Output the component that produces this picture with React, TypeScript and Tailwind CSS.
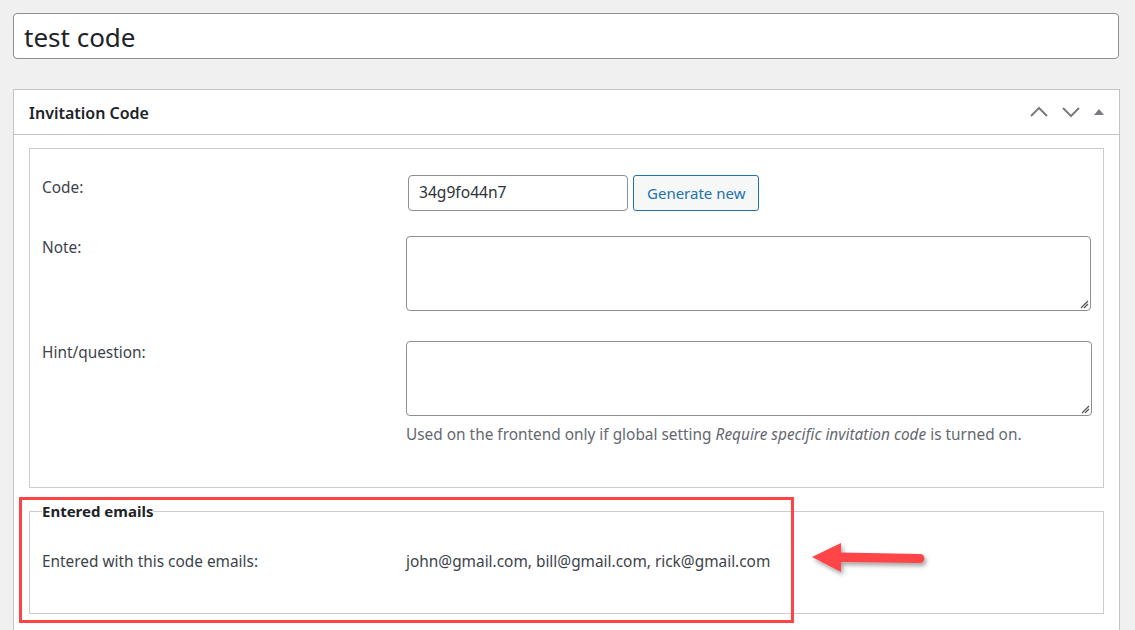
import React from 'react';

const font = { fontFamily: '"Noto Sans", "Open Sans", sans-serif' };

const Chevron = ({ up }: { up?: boolean }) => (
  <svg width="20" height="12" viewBox="0 0 20 12" className="text-[#787c82]">
    <path
      d={up ? 'M2 10 L10 2 L18 10' : 'M2 2 L10 10 L18 2'}
      fill="none"
      stroke="currentColor"
      strokeWidth="2"
    />
  </svg>
);

const Arrow = () => (
  <svg width="140" height="50" viewBox="0 0 140 50" className="absolute left-[800px] top-[533px]">
    <defs>
      <filter id="sh" x="-20%" y="-40%" width="140%" height="180%">
        <feDropShadow dx="2" dy="3" stdDeviation="2" floodColor="#000" floodOpacity="0.35" />
      </filter>
    </defs>
    <g filter="url(#sh)" fill="#ff4447">
      <path d="M12 24 L41 10 L41 39 Z" />
      <path d="M40 19.5 L120 21 A4.5 4.5 0 0 1 120 30 L40 29 Z" />
    </g>
  </svg>
);

export default function App() {
  return (
    <div className="relative min-h-[630px] bg-[#f0f0f1] pt-[13px] px-[13px] text-[#3c434a]" style={font}>
      {/* title */}
      <div className="w-[1106px] h-[46px] bg-white border border-[#8c8f94] rounded-[4px] flex items-center pl-[10px] pt-[3px] text-[26px] text-[#1d2327]">
        test code
      </div>

      {/* postbox */}
      <div className="mt-[30px] w-[1107px] bg-white border border-[#c3c4c7] border-b-0 pb-[20px]">
        <div className="h-[45px] border-b border-[#c3c4c7] flex items-center pl-[15px] pr-[8px]">
          <h2 className="text-[16px] font-semibold text-[#1d2327] flex-1 pt-[1px]">Invitation Code</h2>
          <div className="flex items-center">
            <div className="w-[32px] flex justify-center"><Chevron up /></div>
            <div className="w-[32px] flex justify-center"><Chevron /></div>
            <div className="w-[24px] flex justify-center">
              <div className="w-0 h-0 border-l-[5px] border-r-[5px] border-b-[6px] border-l-transparent border-r-transparent border-b-[#787c82]" />
            </div>
          </div>
        </div>

        <div className="mx-[15px] mt-[13px] border border-[#cccccc] px-[12px] pt-[26px] pb-[41px] text-[15.4px]">
          <div className="flex">
            <div className="w-[366px] pt-[1px]">Code:</div>
            <div className="flex gap-[5px]">
              <div className="w-[220px] h-[36px] border border-[#8c8f94] rounded-[4px] flex items-center px-[10px] text-[15.6px] text-[#2c3338]">
                34g9fo44n7
              </div>
              <button className="h-[36px] px-[13px] border border-[#2271b1] rounded-[3px] bg-[#f6f7f7] text-[#2271b1] text-[15px]">
                Generate new
              </button>
            </div>
          </div>

          <div className="flex mt-[25px]">
            <div className="w-[364px]">Note:</div>
            <div className="relative w-[686px] h-[75px] border border-[#8c8f94] rounded-[4px]">
              <Grip />
            </div>
          </div>

          <div className="flex mt-[30px]">
            <div className="w-[364px] shrink-0">Hint/question:</div>
            <div>
              <div className="relative w-[686px] h-[75px] border border-[#8c8f94] rounded-[4px]">
                <Grip />
              </div>
              <p className="mt-[7px] text-[#646970]">
                Used on the frontend only if global setting <i>Require specific invitation code</i> is turned on.
              </p>
            </div>
          </div>
        </div>

        <fieldset className="mx-[15px] mt-[13px] border border-[#cccccc] px-[12px] pb-[40px] text-[15.4px]">
          <legend className="font-bold text-[15px] text-[#1d2327] leading-[20px]">Entered emails</legend>
          <div className="flex mt-[29px]">
            <div className="w-[364px]">Entered with this code emails:</div>
            <div>john@gmail.com, bill@gmail.com, rick@gmail.com</div>
          </div>
        </fieldset>
      </div>

      {/* highlight */}
      <div className="absolute left-[19px] top-[497px] w-[775px] h-[126px] border-[3px] border-[#ff4447]" />
      <Arrow />
    </div>
  );
}

function Grip() {
  return (
    <svg width="10" height="10" viewBox="0 0 10 10" className="absolute right-[1px] bottom-[1px]">
      <path d="M9 2 L2 9 M9 5 L5 9" stroke="#555" strokeWidth="1.2" />
    </svg>
  );
}
